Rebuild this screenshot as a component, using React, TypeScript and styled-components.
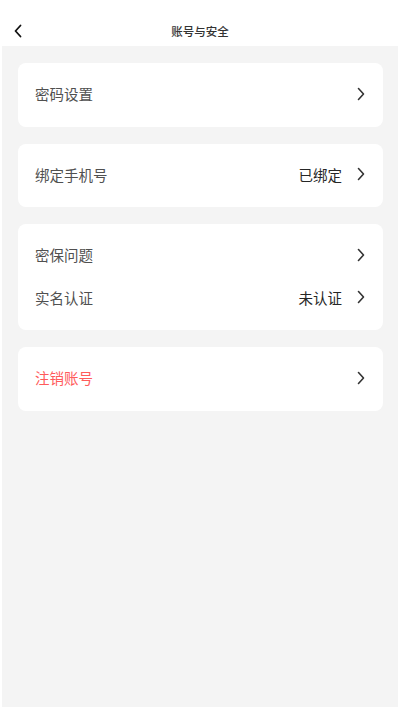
import styled, { createGlobalStyle } from 'styled-components';

const GlobalStyle = createGlobalStyle`
  html, body {
    margin: 0;
    padding: 0;
    background: #ffffff;
  }
  body {
    font-family: "Noto Sans CJK SC", "Noto Sans", sans-serif;
  }
`;

const Page = styled.div`
  width: 400px;
  height: 710px;
  display: flex;
  flex-direction: column;
  background: #ffffff;
`;

const Header = styled.header`
  height: 46px;
  display: flex;
  align-items: center;
  justify-content: center;
  position: relative;
  flex-shrink: 0;
`;

const BackButton = styled.button`
  position: absolute;
  left: 10px;
  top: 23px;
  width: 16px;
  height: 16px;
  padding: 0;
  border: none;
  background: none;
  display: flex;
  align-items: center;
  justify-content: center;
`;

const Title = styled.h1`
  margin: 0;
  margin-top: 16px;
  font-size: 11.5px;
  font-weight: 500;
  color: #333333;
`;

const Body = styled.main`
  flex: 1;
  margin: 0 2px 3px 2px;
  background: #f4f4f4;
  padding: 17px 15px 0 16px;
  display: flex;
  flex-direction: column;
  gap: 17px;
`;

const Card = styled.section`
  background: #ffffff;
  border-radius: 8px;
  padding: 9.5px 0 11.5px;
  display: flex;
  flex-direction: column;
`;

const Row = styled.div`
  height: 42.5px;
  display: flex;
  align-items: center;
  padding: 0 17px 0 17px;
`;

const Label = styled.span<{ danger?: boolean }>`
  flex: 1;
  font-size: 14.5px;
  color: ${(p) => (p.danger ? '#ff5b5b' : '#505050')};
`;

const Value = styled.span`
  font-size: 14.5px;
  color: #262626;
  margin-right: 14px;
`;

const Chevron = () => (
  <svg width="10" height="14" viewBox="0 0 10 14" fill="none">
    <path d="M2.5 1.5 L7.5 7 L2.5 12.5" stroke="#333" strokeWidth="1.6" strokeLinecap="round" strokeLinejoin="round" />
  </svg>
);

interface Item {
  label: string;
  value?: string;
  danger?: boolean;
}

const groups: Item[][] = [
  [{ label: '密码设置' }],
  [{ label: '绑定手机号', value: '已绑定' }],
  [{ label: '密保问题' }, { label: '实名认证', value: '未认证' }],
  [{ label: '注销账号', danger: true }],
];

function App() {
  return (
    <>
      <GlobalStyle />
      <Page>
        <Header>
          <BackButton>
            <svg width="10" height="14" viewBox="0 0 10 14" fill="none">
              <path d="M7.5 1.5 L2.5 7 L7.5 12.5" stroke="#111" strokeWidth="1.8" strokeLinecap="round" strokeLinejoin="round" />
            </svg>
          </BackButton>
          <Title>账号与安全</Title>
        </Header>
        <Body>
          {groups.map((items, i) => (
            <Card key={i}>
              {items.map((item) => (
                <Row key={item.label}>
                  <Label danger={item.danger}>{item.label}</Label>
                  {item.value && <Value>{item.value}</Value>}
                  <Chevron />
                </Row>
              ))}
            </Card>
          ))}
        </Body>
      </Page>
    </>
  );
}

export default App;
